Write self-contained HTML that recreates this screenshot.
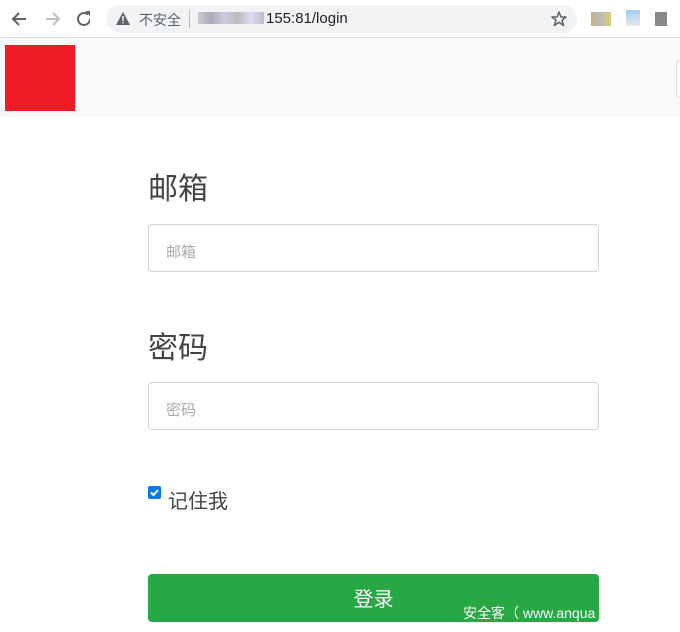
<!DOCTYPE html><html><head><meta charset="utf-8"><style>
body{margin:0;width:680px;height:632px;overflow:hidden;background:#fff;font-family:"Liberation Sans","Noto Sans CJK SC",sans-serif;position:relative}
.a{position:absolute}
.inp{position:absolute;left:148px;width:449px;height:46px;border:1px solid #ced4da;border-radius:4px;box-sizing:content-box}
.ph{position:absolute;left:17px;top:16px;font-size:15px;color:#aaa}
.lbl{position:absolute;left:148px;font-size:30px;color:#444}
</style></head><body>
<div class="a" style="left:0;top:0;width:680px;height:37px;background:#fff;border-bottom:1px solid #dadce0"></div>
<svg class="a" style="left:10px;top:10px" width="80" height="18" viewBox="0 0 80 18">
<path d="M16 9H3M9 3L3 9l6 6" stroke="#5f6368" stroke-width="2" fill="none"/>
<path d="M36 9h13M43 3l6 6-6 6" stroke="#bdc1c6" stroke-width="2" fill="none"/>
<path d="M80 9a6 6 0 1 1-2-4.5" stroke="#5f6368" stroke-width="2" fill="none"/><path d="M75 1h5v5z" fill="#5f6368"/>
</svg>
<div class="a" style="left:106px;top:5px;width:471px;height:28px;border-radius:14px;background:#f1f3f4"></div>
<svg class="a" style="left:116px;top:12px" width="14" height="13"><path d="M7 0L14 13H0z" fill="#5f6368"/><rect x="6.3" y="4" width="1.4" height="5" fill="#fff"/><rect x="6.3" y="10" width="1.4" height="1.4" fill="#fff"/></svg>
<div class="a" style="left:139px;top:10px;font-size:14px;color:#5f6368">不安全</div>
<div class="a" style="left:189px;top:10px;width:1px;height:18px;background:#bbb"></div>
<div class="a" style="left:198px;top:12px;width:66px;height:12px;background:linear-gradient(90deg,#ccc,#aab,#ccd,#bbb,#dde,#bbc)"></div>
<div class="a" style="left:266px;top:10px;font-size:15px;color:#202124">155:81/login</div>
<svg class="a" style="left:551px;top:11px" width="16" height="16" viewBox="0 0 16 16"><path d="M8 1l2 5h5l-4 3.2 1.6 5.3L8 11.3 3.4 14.5 5 9.2 1 6h5z" fill="none" stroke="#5f6368" stroke-width="1.5" stroke-linejoin="round"/></svg>
<div class="a" style="left:591px;top:12px;width:20px;height:14px;background:linear-gradient(90deg,#c8b088,#bbb,#e0d070)"></div>
<div class="a" style="left:626px;top:10px;width:14px;height:16px;background:linear-gradient(#a0cff0,#e8e8e8)"></div>
<div class="a" style="left:655px;top:12px;width:12px;height:14px;background:#888"></div>
<div class="a" style="left:0;top:38px;width:680px;height:79px;background:#f8f9fa"></div>
<div class="a" style="left:5px;top:45px;width:70px;height:66px;background:#ee1c25"></div>
<div class="a" style="left:676px;top:60px;width:8px;height:36px;border:1px solid #ddd;border-radius:4px;background:#fff"></div>
<div class="lbl" style="top:164px">邮箱</div>
<div class="inp" style="top:224px"><span class="ph">邮箱</span></div>
<div class="lbl" style="top:323px">密码</div>
<div class="inp" style="top:382px"><span class="ph">密码</span></div>
<div class="a" style="left:148px;top:486px;width:13px;height:13px;background:#0b76ef;border-radius:2px"><svg width="13" height="13"><path d="M3 6.5l2.5 2.5L10 4" stroke="#fff" stroke-width="2" fill="none"/></svg></div>
<div class="a" style="left:168px;top:485px;font-size:20px;color:#444">记住我</div>
<div class="a" style="left:148px;top:574px;width:451px;height:48px;background:#28a745;border-radius:4px"></div>
<div class="a" style="left:148px;top:583px;width:451px;text-align:center;font-size:20px;color:#fff">登录</div>
<div class="a" style="left:463px;top:603px;font-size:14px;color:#fff">安全客（ www.anqua</div>
</body></html>
